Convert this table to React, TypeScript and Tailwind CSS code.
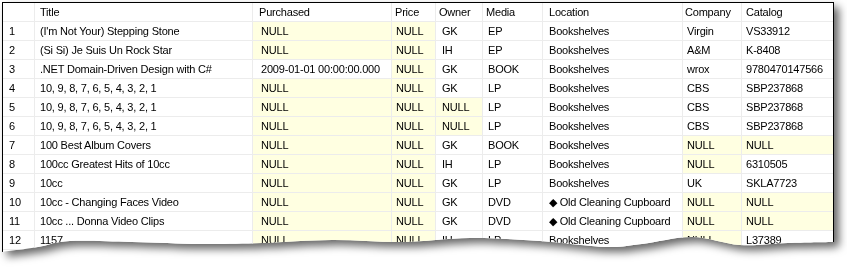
import { FC } from 'react';

// Column geometry of the results grid; padding differs per column the way the source grid draws it.
const COLUMNS = [
  { label: 'Title', head: 'pl-[5px]', cell: 'pl-[5px]' },
  { label: 'Purchased', head: 'pl-[6px]', cell: 'pl-[8px]' },
  { label: 'Price', head: 'pl-[3px]', cell: 'pl-[4px]' },
  { label: 'Owner', head: 'pl-[3px]', cell: 'pl-[6px]' },
  { label: 'Media', head: 'pl-[3px]', cell: 'pl-[5px]' },
  { label: 'Location', head: 'pl-[6px]', cell: 'pl-[6px]' },
  { label: 'Company', head: 'pl-[2px]', cell: 'pl-[4px]' },
  { label: 'Catalog', head: 'pl-[4px]', cell: 'pl-[4px]' },
];

const CUPBOARD = '◆ Old Cleaning Cupboard';
const COUNTDOWN = '10, 9, 8, 7, 6, 5, 4, 3, 2, 1';

const ROWS: string[][] = [
  ["(I'm Not Your) Stepping Stone", 'NULL', 'NULL', 'GK', 'EP', 'Bookshelves', 'Virgin', 'VS33912'],
  ['(Si Si) Je Suis Un Rock Star', 'NULL', 'NULL', 'IH', 'EP', 'Bookshelves', 'A&M', 'K-8408'],
  ['.NET Domain-Driven Design with C#', '2009-01-01 00:00:00.000', 'NULL', 'GK', 'BOOK', 'Bookshelves', 'wrox', '9780470147566'],
  [COUNTDOWN, 'NULL', 'NULL', 'GK', 'LP', 'Bookshelves', 'CBS', 'SBP237868'],
  [COUNTDOWN, 'NULL', 'NULL', 'NULL', 'LP', 'Bookshelves', 'CBS', 'SBP237868'],
  [COUNTDOWN, 'NULL', 'NULL', 'NULL', 'LP', 'Bookshelves', 'CBS', 'SBP237868'],
  ['100 Best Album Covers', 'NULL', 'NULL', 'GK', 'BOOK', 'Bookshelves', 'NULL', 'NULL'],
  ['100cc Greatest Hits of 10cc', 'NULL', 'NULL', 'IH', 'LP', 'Bookshelves', 'NULL', '6310505'],
  ['10cc', 'NULL', 'NULL', 'GK', 'LP', 'Bookshelves', 'UK', 'SKLA7723'],
  ['10cc - Changing Faces Video', 'NULL', 'NULL', 'GK', 'DVD', CUPBOARD, 'NULL', 'NULL'],
  ['10cc ... Donna Video Clips', 'NULL', 'NULL', 'GK', 'DVD', CUPBOARD, 'NULL', 'NULL'],
  ['1157', 'NULL', 'NULL', 'IH', 'LP', 'Bookshelves', 'NULL', 'L37389'],
];

// Torn bottom edge of the "paper", in the paper's own coordinates (right to left).
const TEAR: [number, number][] = [
  [832, 240],
  [786, 241],
  [738, 243],
  [690, 235],
  [640, 242],
  [604, 245],
  [538, 239],
  [468, 236],
  [400, 240],
  [330, 238],
  [260, 241],
  [200, 242],
  [130, 240],
  [68, 239],
  [36, 245],
  [0, 250],
];

const tearPath = (() => {
  let d = `M0 0 H832 V${TEAR[0][1]}`;
  for (let i = 0; i < TEAR.length - 1; i++) {
    const p0 = TEAR[Math.max(i - 1, 0)];
    const p1 = TEAR[i];
    const p2 = TEAR[i + 1];
    const p3 = TEAR[Math.min(i + 2, TEAR.length - 1)];
    const c1x = p1[0] + (p2[0] - p0[0]) / 6;
    const c1y = p1[1] + (p2[1] - p0[1]) / 6;
    const c2x = p2[0] - (p3[0] - p1[0]) / 6;
    const c2y = p2[1] - (p3[1] - p1[1]) / 6;
    d += ` C${c1x} ${c1y} ${c2x} ${c2y} ${p2[0]} ${p2[1]}`;
  }
  return `${d} Z`;
})();

const GRID_COLS = 'grid grid-cols-[32px_218px_139px_44px_47px_60px_140px_59px_91px]';
const LINE = 'border-b border-[#ececec]';

const Cell: FC<{ text: string; pad: string; last: boolean }> = ({ text, pad, last }) => (
  <div
    className={`h-[19px] flex items-center whitespace-nowrap overflow-hidden ${pad} ${LINE} ${
      last ? '' : 'border-r'
    } ${text === 'NULL' ? 'bg-[#ffffe1]' : 'bg-white'}`}
  >
    {text}
  </div>
);

export default function App() {
  return (
    <div className="w-[847px] h-[268px] bg-white overflow-hidden pl-[2px] pt-[2px]">
      <svg width="0" height="0" className="absolute">
        <defs>
          <clipPath id="torn-edge" clipPathUnits="userSpaceOnUse">
            <path d={tearPath} />
          </clipPath>
        </defs>
      </svg>
      <div className="w-[832px] drop-shadow-[5px_5px_4px_rgba(0,0,0,0.6)]">
        <div className="w-[832px] h-[252px] bg-white border-l border-t border-r border-black overflow-hidden [clip-path:url(#torn-edge)] font-['Liberation_Sans',Arial,sans-serif] text-[11px] tracking-[-0.2px] text-black">
          <div className={GRID_COLS}>
            <div className={`h-[19px] border-r ${LINE}`} />
            {COLUMNS.map((col, i) => (
              <div
                key={col.label}
                className={`h-[19px] flex items-center ${col.head} ${LINE} ${i === COLUMNS.length - 1 ? '' : 'border-r'}`}
              >
                {col.label}
              </div>
            ))}
          </div>
          {ROWS.map((row, r) => (
            <div key={r} className={GRID_COLS}>
              <div className={`h-[19px] flex items-center pl-[6px] border-r ${LINE}`}>{r + 1}</div>
              {row.map((text, c) => (
                <Cell key={c} text={text} pad={COLUMNS[c].cell} last={c === row.length - 1} />
              ))}
            </div>
          ))}
        </div>
      </div>
    </div>
  );
}
